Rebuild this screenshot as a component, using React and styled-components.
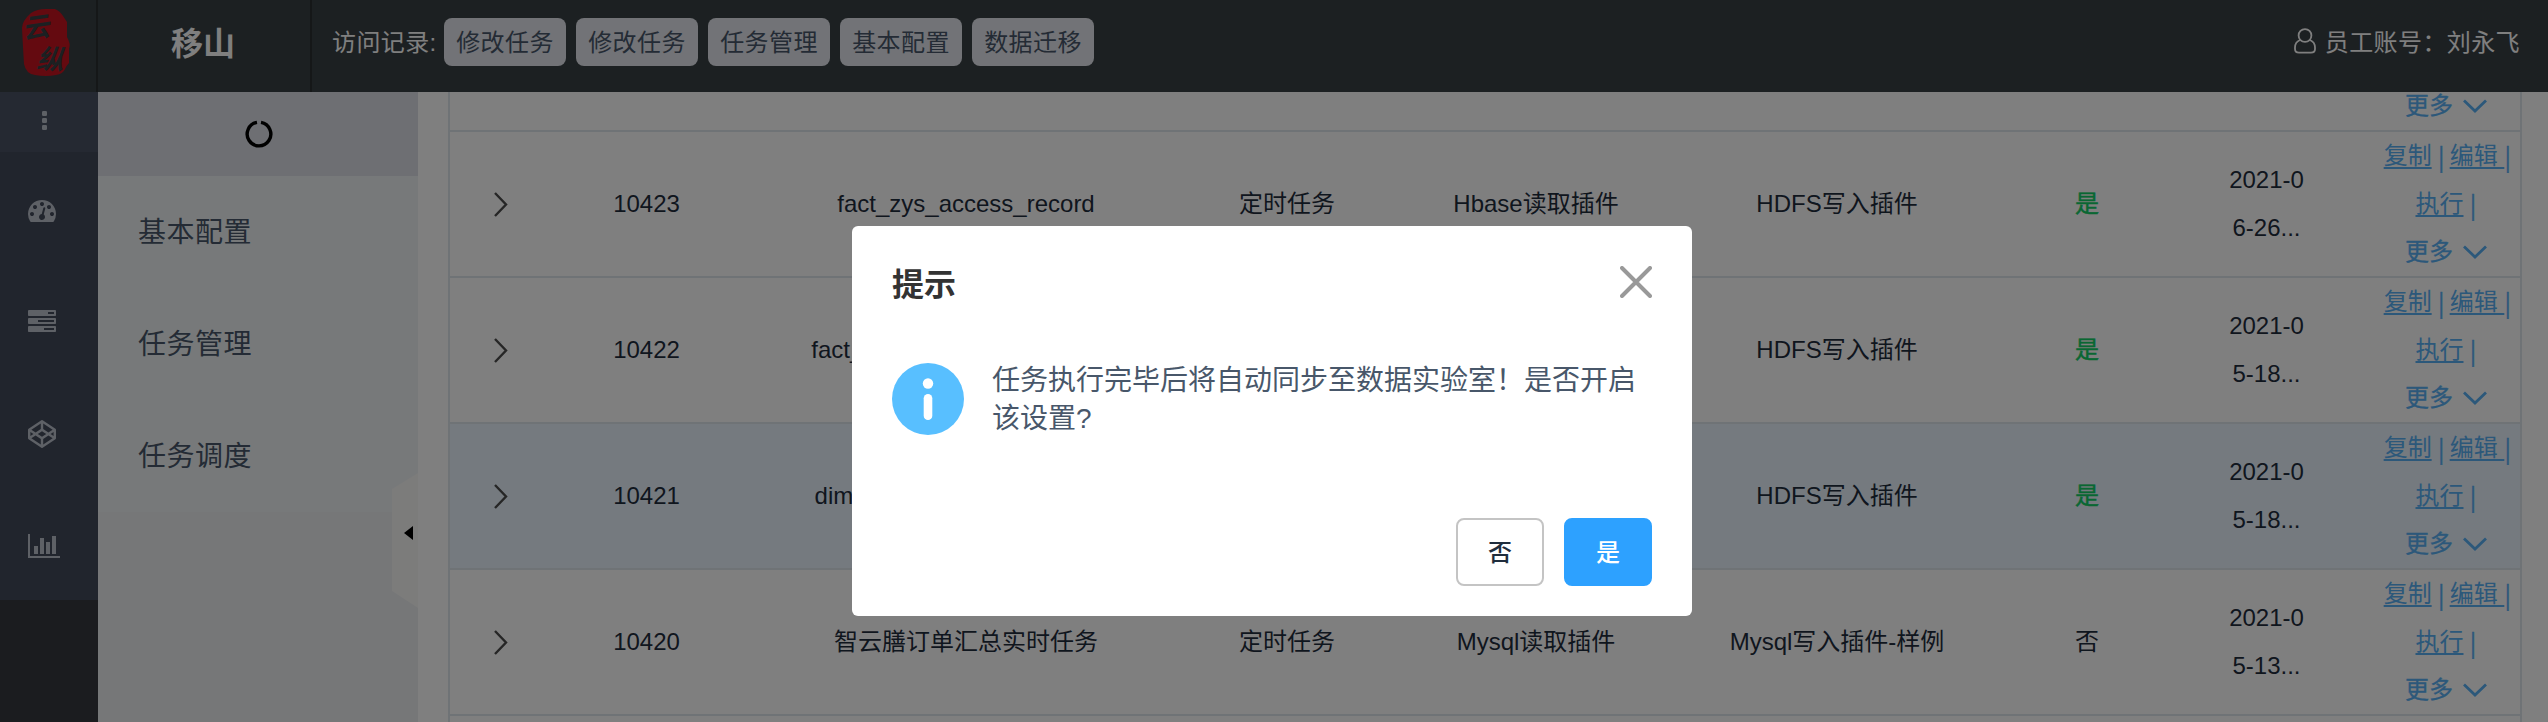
import React from 'react';
import styled, { createGlobalStyle, css } from 'styled-components';

const GlobalStyle = createGlobalStyle`
  * { box-sizing: border-box; }
  body {
    margin: 0;
    background: #fff;
    overflow: hidden;
    font-family: "Liberation Sans", "Noto Sans CJK SC", sans-serif;
    font-size: 24px;
    color: #1f2d3d;
  }
  svg { display: block; }
`;

const Page = styled.div`
  display: flex;
  flex-direction: column;
  width: 2548px;
  height: 722px;
  overflow: hidden;
`;

const Header = styled.header`
  display: flex;
  flex: none;
  height: 92px;
  padding-bottom: 8px;
  background: #384044;
  color: #fff;
  letter-spacing: 0.4px;
`;

const HeaderCell = styled.div`
  display: flex;
  align-items: center;
  justify-content: center;
  width: ${(p) => p.$width}px;
  height: 92px;
  padding: ${(p) => p.$pad};
  border-right: 2px solid #2a2f31;
`;

const AppTitle = styled.h1`
  margin: 0;
  font-size: 32px;
  font-weight: 700;
  letter-spacing: 0;
`;

const History = styled.div`
  display: flex;
  align-items: center;
  gap: 10px;
  padding-left: 20px;
`;

const HistoryLabel = styled.span`
  margin-right: -4px;
  width: 106px;
  padding-bottom: 3px;
  white-space: nowrap;
`;

const HistoryTag = styled.span`
  display: flex;
  align-items: center;
  justify-content: center;
  width: 122px;
  height: 48px;
  padding-bottom: 3px;
  border-radius: 8px;
  background: #e4e6ee;
  color: #48576a;
`;

const User = styled.div`
  display: flex;
  align-items: center;
  gap: 9px;
  margin-left: auto;
  padding: 0 28px 3px 0;
  white-space: nowrap;
`;

const Body = styled.div`
  display: flex;
  flex: 1;
  min-height: 0;
`;

const Rail = styled.nav`
  width: 98px;
  background: #36383f;
  color: #bcc2cd;
`;

const RailToggle = styled.div`
  display: flex;
  justify-content: center;
  height: 60px;
  padding: 19px 8px 0 0;
  background: #4a5264;
`;

const RailItem = styled.div`
  display: flex;
  align-items: center;
  height: 112px;
  padding: 4px 0 0 28px;
  background: #424a5a;
`;

const SubMenu = styled.aside`
  position: relative;
  width: 320px;
  background: #eceef0;
  letter-spacing: 0.5px;
`;

const SubMenuTop = styled.div`
  display: flex;
  align-items: center;
  justify-content: center;
  height: 84px;
  padding-left: 1px;
  background: #dcdee6;
`;

const SubMenuItem = styled.div`
  display: flex;
  align-items: center;
  height: 112px;
  padding: 0 0 4px 40px;
  background: #eff2f4;
  color: #48576a;
  font-size: 28px;
`;

const Handle = styled.div`
  position: absolute;
  right: 0;
  top: 381px;
  display: flex;
  align-items: center;
  justify-content: flex-end;
  width: 26px;
  height: 135px;
  padding: 0 5px 15px 0;
  clip-path: polygon(0 16px, 100% 0, 100% 100%, 0 118px);
  background: #f8f8f7;
`;

const Content = styled.main`
  flex: 1;
  padding: 0 26px 0 30px;
  overflow: hidden;
`;

const Table = styled.div`
  margin-top: -106px;
  height: 760px;
  border: solid #dfe6ec;
  border-width: 0 2px;
`;

const Row = styled.div`
  display: grid;
  grid-template-columns: 100px 193px 446px 196px 302px 300px 200px 159px 1fr;
  height: 146px;
  align-items: center;
  border-bottom: 2px solid #dfe6ec;
  line-height: 48px;
  text-align: center;
  white-space: nowrap;
  background: ${(p) => (p.$active ? '#eaf5ff' : '#fff')};
`;

const Cell = styled.div`
  display: flex;
  flex-direction: column;
  align-items: center;
  ${(p) => p.$green && css`color: #13ce66; -webkit-text-stroke: 0.5px;`}
`;

const DateLine = styled.span`
  display: block;
`;

const Actions = styled.div`
  height: 144px;
  display: flex;
  flex-direction: column;
  justify-content: flex-end;
  padding-left: 26px;
  color: #58b0f5;
`;

const ActionLine = styled.div`
  display: flex;
  align-items: center;
  justify-content: center;
  height: 48px;
  padding-bottom: 1px;
`;

const Link = styled.a`
  color: #58b0f5;
  text-decoration: underline;
  text-decoration-thickness: 2px;
  text-underline-offset: 3px;
  white-space: pre;
`;

const Bar = styled.span`
  display: block;
  width: 7px;
  margin: ${(p) => p.$margin};
  font: 24px/30px "Noto Sans CJK SC", sans-serif;
  -webkit-text-stroke: 0.4px;
`;

const More = styled.span`
  margin-right: 10px;
  -webkit-text-stroke: 0.3px;
`;

const Mask = styled.div`
  position: fixed;
  inset: 0;
  display: flex;
  justify-content: center;
  align-items: flex-start;
  padding: 226px 4px 0 0;
  background: rgba(0, 0, 0, 0.5);
`;

const Dialog = styled.section`
  display: flex;
  flex-direction: column;
  width: 840px;
  height: 390px;
  padding: 40px 40px 30px;
  border-radius: 6px;
  background: #fff;
`;

const DialogHead = styled.div`
  display: flex;
  align-items: center;
  justify-content: space-between;
  height: 32px;
`;

const DialogTitle = styled.h2`
  margin: 6px 0 0;
  font-size: 32px;
  line-height: 32px;
  font-weight: 700;
  color: #333;
`;

const DialogBody = styled.div`
  display: flex;
  align-items: flex-start;
  gap: 28px;
  margin-top: 65px;
`;

const Message = styled.p`
  flex: 1;
  margin: -1px 0 0;
  font-size: 28px;
  line-height: 38px;
  white-space: nowrap;
  color: #48576a;
`;

const DialogFoot = styled.div`
  display: flex;
  justify-content: flex-end;
  gap: 20px;
  margin-top: auto;
`;

const Button = styled.button`
  width: 88px;
  height: 68px;
  padding: 0 0 4px;
  border: 2px solid ${(p) => (p.$primary ? '#2da1ff' : '#c4c4c4')};
  border-radius: 8px;
  background: ${(p) => (p.$primary ? '#2da1ff' : '#fff')};
  color: ${(p) => (p.$primary ? '#fff' : '#1f2d3d')};
  font: 500 24px "Noto Sans CJK SC", sans-serif;
`;

const Logo = () => (
  <svg width="60" height="84" viewBox="-5 -8 60 84">
    <path
      d="M10 5 Q16 1 25 1 L34 1 Q39 3 42 8 L46 14 L46 29 Q50 36 48 41 L48 55 Q45 58 44 61 Q42 66 35 67 Q25 69 14 67 Q5 66 3 56 Q2 40 1 20 Q1 13 10 5 Z"
      fill="#c81420"
    />
    <g fill="#384044" fontFamily="Noto Sans CJK SC" fontWeight="700">
      <text transform="translate(3 31) rotate(-8) skewX(-12)" fontSize="27">云</text>
      <text transform="translate(15 60) rotate(4) skewX(-14)" fontSize="27">纵</text>
    </g>
  </svg>
);

const railIcons = [
  {
    width: 28,
    box: '0 0 1792 1792',
    d: 'M384 1152q0-53-37.5-90.5T256 1024t-90.5 37.5T128 1152t37.5 90.5T256 1280t90.5-37.5T384 1152zm192-448q0-53-37.5-90.5T448 576t-90.5 37.5T320 704t37.5 90.5T448 832t90.5-37.5T576 704zm428 481l101-382q6-26-7.5-48.5T1059 725t-48 6.5-30 39.5l-101 382q-60 5-107 43.5t-63 98.5q-20 77 20 146t117 89 146-20 89-117q16-60-6-117t-72-91zm660-33q0-53-37.5-90.5T1536 1024t-90.5 37.5-37.5 90.5 37.5 90.5 90.5 37.5 90.5-37.5 37.5-90.5zm-640-640q0-53-37.5-90.5T896 384t-90.5 37.5T768 512t37.5 90.5T896 640t90.5-37.5T1024 512zm448 192q0-53-37.5-90.5T1344 576t-90.5 37.5T1216 704t37.5 90.5T1344 832t90.5-37.5T1472 704zm320 448q0 261-141 483-19 29-54 29H195q-35 0-54-29Q0 1414 0 1152q0-182 71-348t191-286 286-191 348-71 348 71 286 191 191 286 71 348z',
  },
  {
    width: 28,
    box: '0 0 1792 1792',
    d: 'M1024 1408h640v-128h-640v128zm-384-512h1024V768H640v128zm640-512h384V256h-384v128zm512 832v256q0 26-19 45t-45 19H64q-26 0-45-19t-19-45v-256q0-26 19-45t45-19h1664q26 0 45 19t19 45zm0-512v256q0 26-19 45t-45 19H64q-26 0-45-19T0 960V704q0-26 19-45t45-19h1664q26 0 45 19t19 45zm0-512v256q0 26-19 45t-45 19H64q-26 0-45-19T0 448V192q0-26 19-45t45-19h1664q26 0 45 19t19 45z',
  },
  {
    width: 28,
    box: '0 0 1792 1792',
    d: 'M216 1169l603 402v-359l-334-223zm-62-144l193-129-193-129v258zm819 546l603-402-269-180-334 223v359zm-77-493l272-182-272-182-272 182zm-411-275l334-223V221L216 623zm960 93l193 129V767zm-138-93l269-180-603-402v359zm485-180v546q0 41-34 64l-819 546q-21 13-43 13t-43-13L34 1233q-34-23-34-64V623q0-41 34-64L853 13q21-13 43-13t43 13l819 546q34 23 34 64z',
  },
  {
    width: 32,
    box: '0 0 2048 1792',
    d: 'M640 896v512H384V896h256zm384-512v1024H768V384h256zm1024 1152v128H0V128h128v1408h1920zm-640-896v768h-256V640h256zm384-384v1152h-256V256h256z',
  },
];

const rows = [
  { id: '', name: '', type: '', reader: '', writer: '', auto: '', date: [] },
  { id: '10423', name: 'fact_zys_access_record', type: '定时任务', reader: 'Hbase读取插件', writer: 'HDFS写入插件', auto: '是', date: ['2021-0', '6-26...'] },
  { id: '10422', name: 'fact_zys_access_record_day', type: '定时任务', reader: 'Hbase读取插件', writer: 'HDFS写入插件', auto: '是', date: ['2021-0', '5-18...'] },
  { id: '10421', name: 'dim_zys_access_record_set', type: '定时任务', reader: 'Hbase读取插件', writer: 'HDFS写入插件', auto: '是', date: ['2021-0', '5-18...'], active: true },
  { id: '10420', name: '智云膳订单汇总实时任务', type: '定时任务', reader: 'Mysql读取插件', writer: 'Mysql写入插件-样例', auto: '否', date: ['2021-0', '5-13...'] },
];

const TaskRow = ({ row }) => (
  <Row $active={row.active}>
    <Cell>
      {row.id && (
        <svg width="16" height="26" viewBox="-1 0 16 26" fill="none" stroke="#4c4c4c" strokeWidth="2.4">
          <path d="M2 2 L13 13.5 L2 25" />
        </svg>
      )}
    </Cell>
    <Cell>{row.id}</Cell>
    <Cell>{row.name}</Cell>
    <Cell>{row.type}</Cell>
    <Cell>{row.reader}</Cell>
    <Cell>{row.writer}</Cell>
    <Cell $green={row.auto === '是'}>{row.auto}</Cell>
    <Cell>{row.date.map((d) => <DateLine key={d}>{d}</DateLine>)}</Cell>
    <Actions>
      {row.id && (
        <>
          <ActionLine>
            <Link>复制</Link><Bar $margin="0 5px 0 6px">|</Bar><Link>{'编辑 '}</Link><Bar $margin="0 -3px 0 0">|</Bar>
          </ActionLine>
          <ActionLine>
            <Link>执行</Link><Bar $margin="0 0 0 6px">|</Bar>
          </ActionLine>
        </>
      )}
      <ActionLine>
        <More>更多</More>
        <svg width="24" height="14" viewBox="0 0 24 14" fill="none" stroke="currentColor" strokeWidth="2.8">
          <path d="M1 1.5 L12 12 L23 1.5" />
        </svg>
      </ActionLine>
    </Actions>
  </Row>
);

export default function App() {
  return (
    <>
      <GlobalStyle />
      <Page>
        <Header>
          <HeaderCell $width={98} $pad="0 4px 8px 0"><Logo /></HeaderCell>
          <HeaderCell $width={214} $pad="0 2px 10px 0"><AppTitle>移山</AppTitle></HeaderCell>
          <History>
            <HistoryLabel>访问记录:</HistoryLabel>
            {['修改任务', '修改任务', '任务管理', '基本配置', '数据迁移'].map((t, i) => (
              <HistoryTag key={i}>{t}</HistoryTag>
            ))}
          </History>
          <User>
            <svg width="22" height="26" viewBox="0 0 22 26" fill="none" stroke="#fff" strokeWidth="1.8">
              <circle cx="11" cy="7.5" r="6.4" />
              <path d="M6 12 C2.5 13.5 1 16.5 1 19.5 V21 Q1 24.6 5 24.6 H17 Q21 24.6 21 21 V19.5 C21 16.5 19.5 13.5 16 12" />
            </svg>
            <span>员工账号：刘永飞</span>
          </User>
        </Header>
        <Body>
          <Rail>
            <RailToggle>
              <svg width="6" height="20" viewBox="0 0 6 20" fill="currentColor">
                <rect y="0" width="5" height="5" rx="1.2" />
                <rect y="7" width="5" height="5" rx="1.2" />
                <rect y="14" width="5" height="5" rx="1.2" />
              </svg>
            </RailToggle>
            {railIcons.map((icon) => (
              <RailItem key={icon.d}>
                <svg width={icon.width} height="28" viewBox={icon.box} fill="currentColor"><path d={icon.d} /></svg>
              </RailItem>
            ))}
          </Rail>
          <SubMenu>
            <SubMenuTop>
              <svg width="28" height="28" viewBox="0 0 28 28" fill="none" stroke="#000" strokeWidth="3.4">
                <path d="M16 2.4 A11.8 11.8 0 1 1 12 2.4" />
              </svg>
            </SubMenuTop>
            {['基本配置', '任务管理', '任务调度'].map((t) => <SubMenuItem key={t}>{t}</SubMenuItem>)}
            <Handle>
              <svg width="9" height="14" viewBox="0 0 9 14"><path d="M9 0 V14 L0 7 Z" /></svg>
            </Handle>
          </SubMenu>
          <Content>
            <Table>{rows.map((r) => <TaskRow key={r.id} row={r} />)}</Table>
          </Content>
        </Body>
      </Page>
      <Mask>
        <Dialog>
          <DialogHead>
            <DialogTitle>提示</DialogTitle>
            <svg width="32" height="32" viewBox="0 0 32 32" stroke="#999" strokeWidth="4" strokeLinecap="round">
              <path d="M2 2 L30 30 M30 2 L2 30" />
            </svg>
          </DialogHead>
          <DialogBody>
            <svg width="72" height="72" viewBox="0 0 72 72">
              <circle cx="36" cy="36" r="36" fill="#58bfff" />
              <circle cx="36" cy="20.5" r="5.2" fill="#fff" />
              <rect x="31.7" y="31" width="8.6" height="26" rx="4.3" fill="#fff" />
            </svg>
            <Message>任务执行完毕后将自动同步至数据实验室！是否开启<br />该设置?</Message>
          </DialogBody>
          <DialogFoot>
            <Button>否</Button>
            <Button $primary>是</Button>
          </DialogFoot>
        </Dialog>
      </Mask>
    </>
  );
}
